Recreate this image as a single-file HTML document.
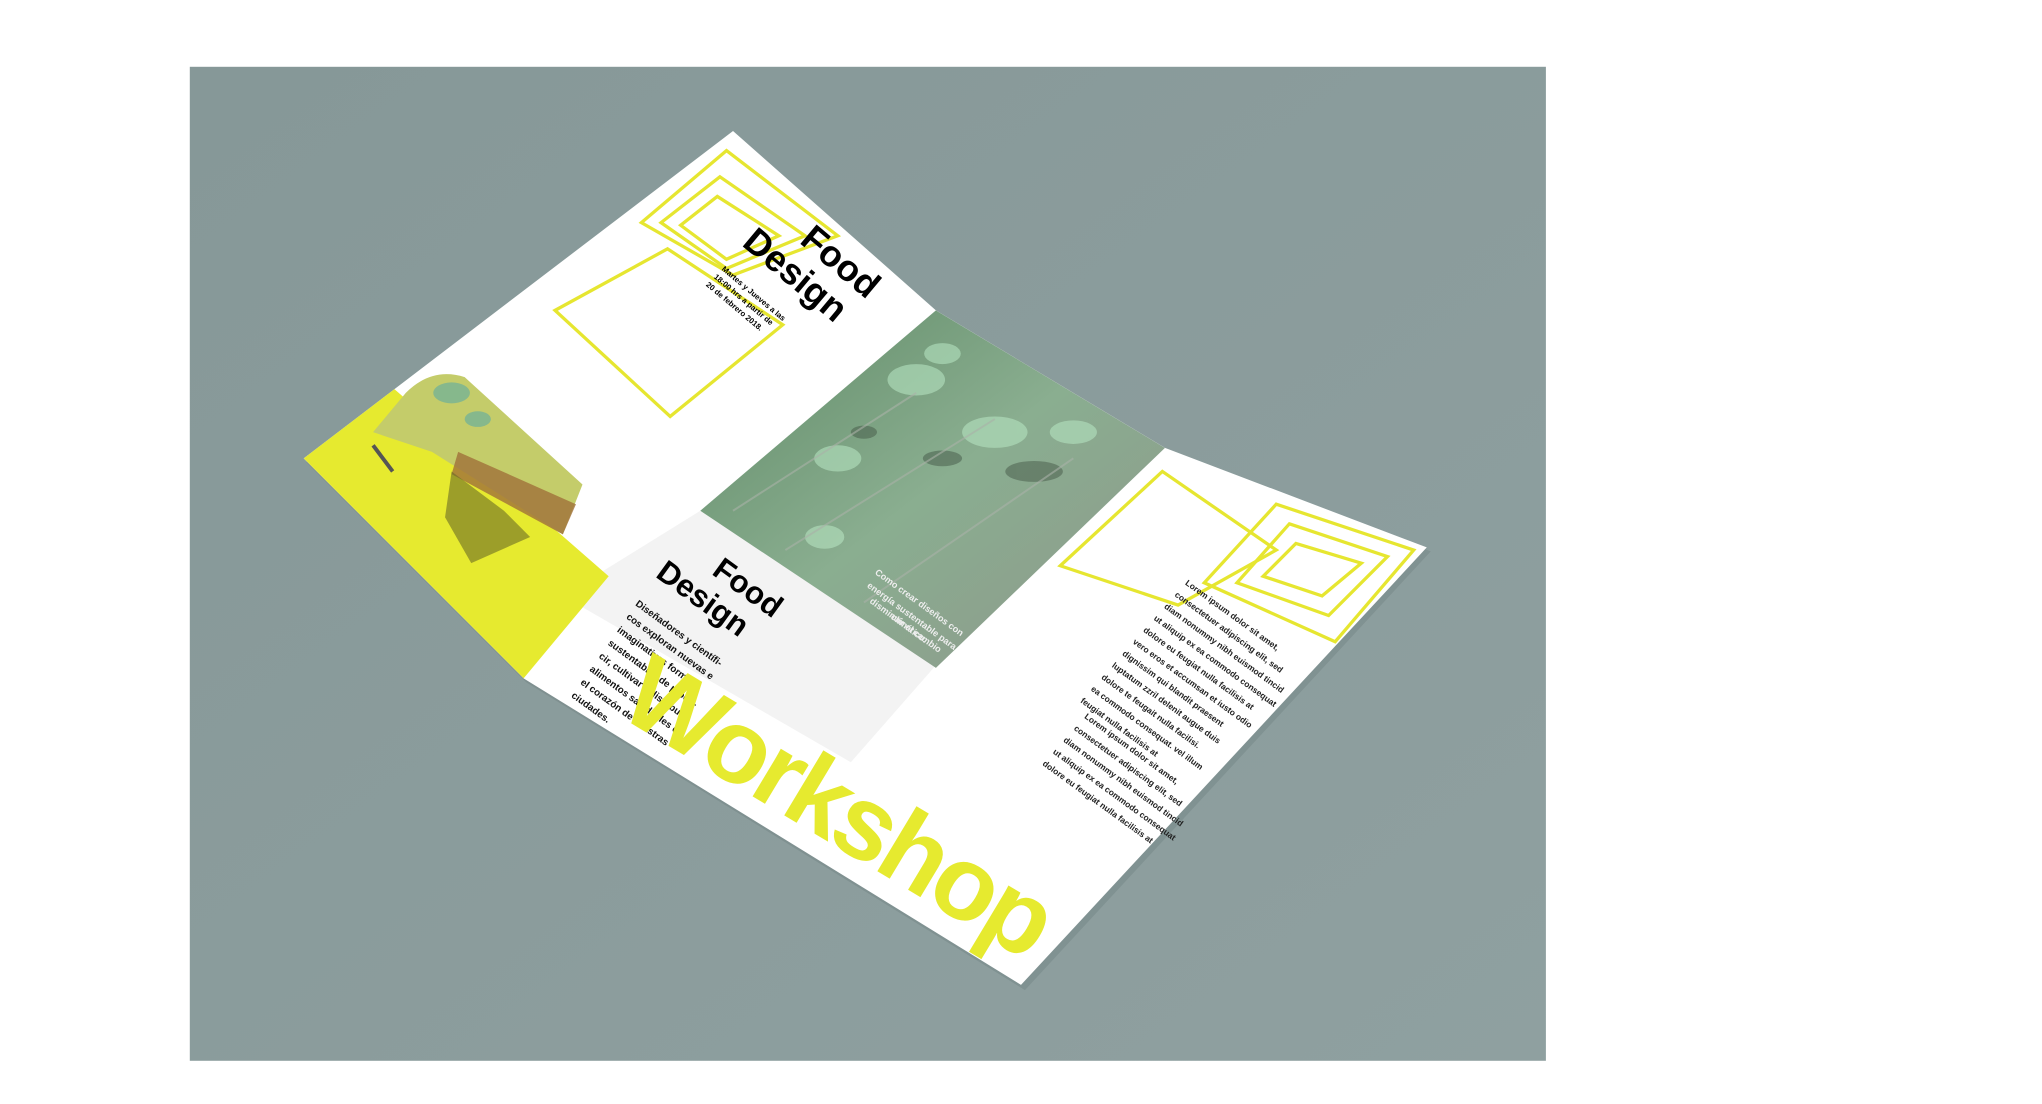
<!DOCTYPE html>
<html><head><meta charset="utf-8"><style>
html,body{margin:0;padding:0;background:#fff;width:2042px;height:1104px;overflow:hidden}
svg{display:block}
text{font-family:"Liberation Sans",sans-serif;font-weight:bold}
</style></head><body>
<svg width="2042" height="1104" viewBox="0 0 1560 843" preserveAspectRatio="none">
<defs>
<linearGradient id="bg" x1="0" y1="0" x2="1" y2="1"><stop offset="0" stop-color="#869898"/><stop offset="1" stop-color="#8fa0a0"/></linearGradient>
<linearGradient id="ph" x1="0" y1="0" x2="1" y2="1"><stop offset="0" stop-color="#5f8a66"/><stop offset=".5" stop-color="#8aae90"/><stop offset="1" stop-color="#8e968c"/></linearGradient>
<clipPath id="pc"><polygon points="560,100 715,237 890,342 1090,418 780,752 400,518 232,350"/></clipPath>
</defs>
<rect x="145" y="51" width="1036" height="759" fill="url(#bg)"/>
<polygon points="562,103 717,241 892,345 1093,421 783,756 402,521 234,353" fill="#6f7f80" opacity=".4"/>
<polygon points="560,100 715,237 890,342 1090,418 780,752 400,518 232,350" fill="#fff"/>
<g clip-path="url(#pc)">
<polygon points="535,390 715,508 650,582 430,455" fill="#f3f3f3"/>
<polygon points="715,237 890,342 715,510 535,390" fill="url(#ph)"/>
<g fill="#b5e3c0" opacity=".6"><ellipse cx="700" cy="290" rx="22" ry="12"/><ellipse cx="760" cy="330" rx="25" ry="12"/><ellipse cx="640" cy="350" rx="18" ry="10"/><ellipse cx="820" cy="330" rx="18" ry="9"/><ellipse cx="630" cy="410" rx="15" ry="9"/><ellipse cx="720" cy="270" rx="14" ry="8"/></g>
<g fill="#3d4f40" opacity=".45"><ellipse cx="790" cy="360" rx="22" ry="8"/><ellipse cx="720" cy="350" rx="15" ry="6"/><ellipse cx="660" cy="330" rx="10" ry="5"/></g>
<g stroke="#aab2a8" stroke-width="1.5" opacity=".6"><line x1="560" y1="390" x2="700" y2="300"/><line x1="600" y1="420" x2="760" y2="320"/><line x1="660" y1="460" x2="820" y2="350"/></g>
<polygon points="232,350 300,296 465,440 400,518" fill="#e6ea2f"/>
<path d="M310,300 Q330,280 355,288 L445,370 L430,408 L330,345 L285,330 Z" fill="#c4cc6a"/>
<g fill="#86b88c"><ellipse cx="345" cy="300" rx="14" ry="8"/><ellipse cx="365" cy="320" rx="10" ry="6"/></g>
<polygon points="350,345 440,385 430,408 345,362" fill="#a0703a" opacity=".8"/>
<polygon points="345,360 385,390 405,410 360,430 340,395" fill="#6b6a26" opacity=".6"/>
<path d="M285,340 L300,360" stroke="#555" stroke-width="3"/>
</g>
<g fill="none" stroke="#e6e630" stroke-width="2.5">
<polygon points="510,190 598,248 512,318 424,237"/>
<polygon points="555,115 640,180 560,210 490,170"/>
<polygon points="550,135 615,180 555,205 505,170"/>
<polygon points="548,150 595,180 555,198 520,172"/>
<polygon points="888,360 975,420 900,462 810,432"/>
<polygon points="975,385 1080,420 1020,490 920,445"/>
<polygon points="985,400 1060,425 1015,470 945,445"/>
<polygon points="990,415 1040,430 1010,455 965,440"/>
</g>
<text transform="translate(610,185) rotate(40)" font-size="28" fill="#000">Food</text>
<text transform="translate(566,187) rotate(40)" font-size="28" fill="#000">Design</text>
<text transform="translate(551,206) rotate(40)" font-size="6" fill="#000">Martes y Jueves a las</text>
<text transform="translate(545,212) rotate(40)" font-size="6" fill="#000">18:00 hrs a partir de</text>
<text transform="translate(539,218) rotate(40)" font-size="6" fill="#000">20 de febrero 2018.</text>
<text transform="translate(543,438) rotate(36)" font-size="24" fill="#000">Food</text>
<text transform="translate(500,440) rotate(36)" font-size="24" fill="#000">Design</text>
<g font-size="7.5" fill="#111">
<text transform="translate(485,462) rotate(36)">Diseñadores y científi-</text>
<text transform="translate(478,472) rotate(36)">cos exploran nuevas e</text>
<text transform="translate(471,482) rotate(36)">imaginativas formas</text>
<text transform="translate(464,492) rotate(36)">sustentables de produ-</text>
<text transform="translate(457,502) rotate(36)">cir, cultivar y distribuir</text>
<text transform="translate(450,512) rotate(36)">alimentos saludables en</text>
<text transform="translate(443,522) rotate(36)">el corazón de nuestras</text>
<text transform="translate(436,532) rotate(36)">ciudades.</text>
</g>
<g font-size="7" fill="#eee">
<text transform="translate(668,438) rotate(36)">Como crear diseños con</text>
<text transform="translate(662,448) rotate(36)">energía sustentable para</text>
<text transform="translate(664,460) rotate(36)">disminuir el cambio</text>
<text transform="translate(680,472) rotate(36)">climático.</text>
</g>
<g font-size="6.5" fill="#222">
<text transform="translate(905,446) rotate(36)">Lorem ipsum dolor sit amet,</text>
<text transform="translate(897,455) rotate(36)">consectetuer adipiscing elit, sed</text>
<text transform="translate(889,464) rotate(36)">diam nonummy nibh euismod tincid</text>
<text transform="translate(881,473) rotate(36)">ut aliquip ex ea commodo consequat</text>
<text transform="translate(873,482) rotate(36)">dolore eu feugiat nulla facilisis at</text>
<text transform="translate(865,491) rotate(36)">vero eros et accumsan et iusto odio</text>
<text transform="translate(857,500) rotate(36)">dignissim qui blandit praesent</text>
<text transform="translate(849,509) rotate(36)">luptatum zzril delenit augue duis</text>
<text transform="translate(841,518) rotate(36)">dolore te feugait nulla facilisi.</text>
<text transform="translate(833,527) rotate(36)">ea commodo consequat. vel illum</text>
<text transform="translate(825,536) rotate(36)">feugiat nulla facilisis at</text>
<text transform="translate(828,548) rotate(36)">Lorem ipsum dolor sit amet,</text>
<text transform="translate(820,557) rotate(36)">consectetuer adipiscing elit, sed</text>
<text transform="translate(812,566) rotate(36)">diam nonummy nibh euismod tincid</text>
<text transform="translate(804,575) rotate(36)">ut aliquip ex ea commodo consequat</text>
<text transform="translate(796,584) rotate(36)">dolore eu feugiat nulla facilisis at</text>
</g>
<text transform="translate(470,545) rotate(31)" font-size="80" fill="#e6ea2f" letter-spacing="-3" font-family="DejaVu Sans">Workshop</text>
</svg>
</body></html>
